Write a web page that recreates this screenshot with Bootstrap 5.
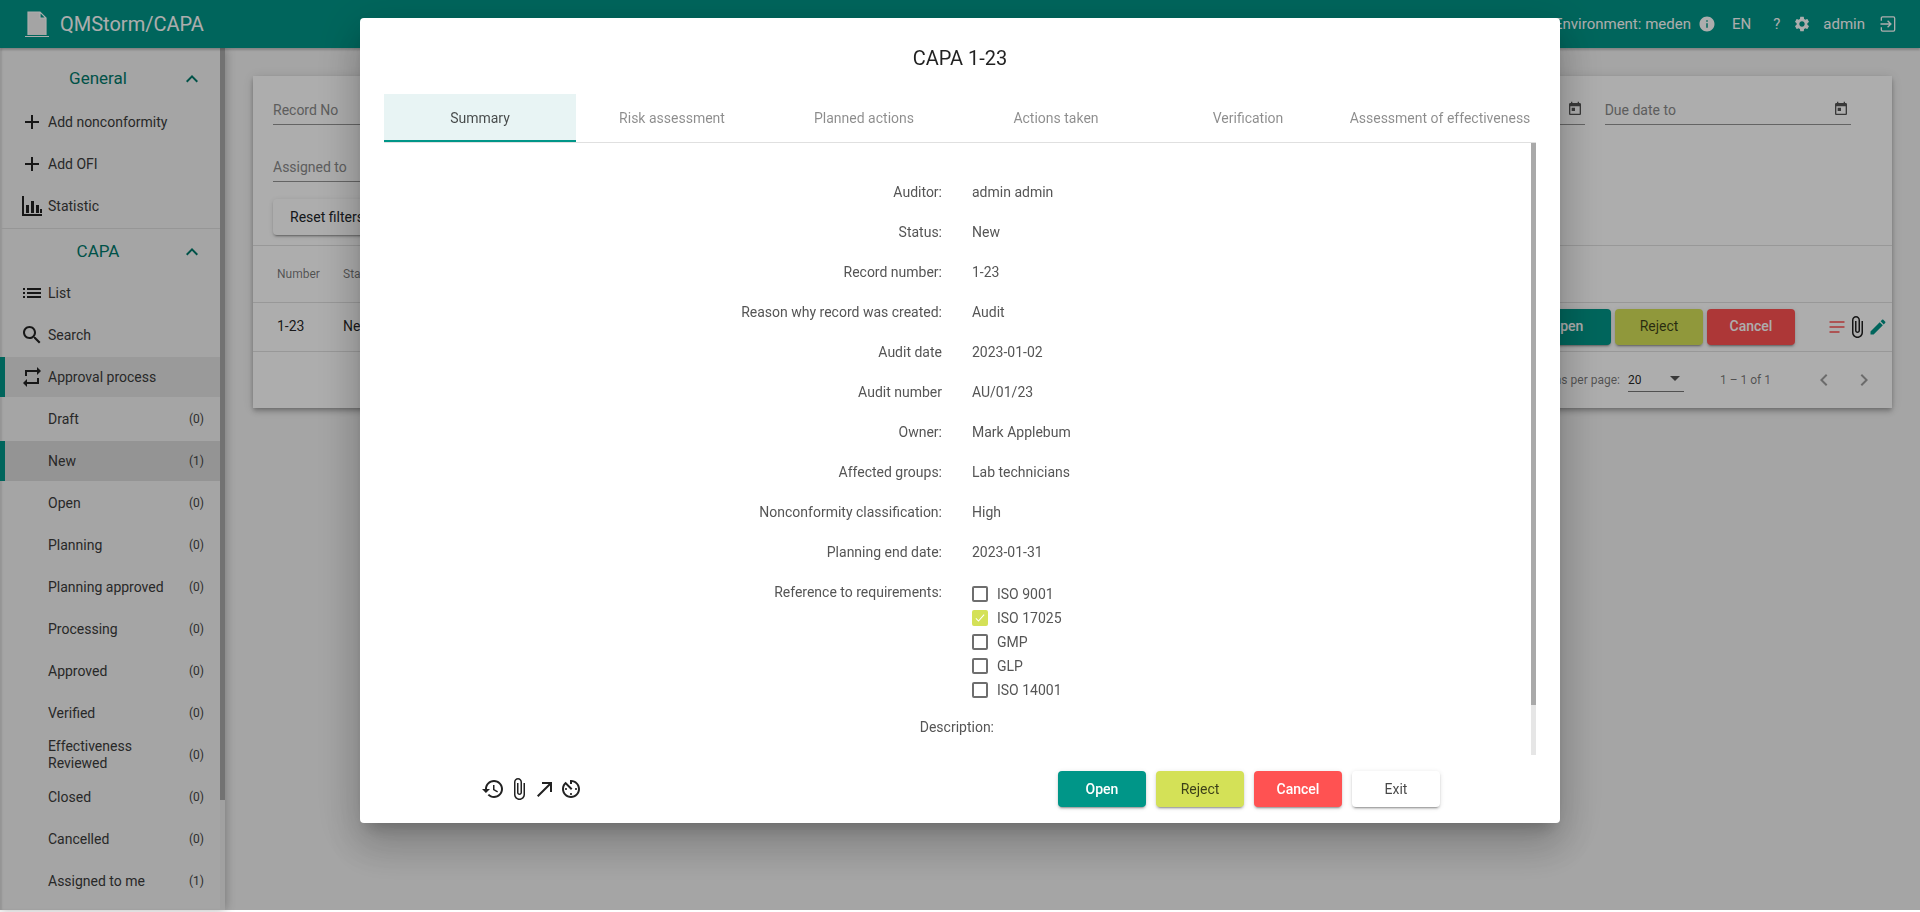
<!DOCTYPE html>
<html lang="en">
<head>
  <meta charset="UTF-8"/>
  <title>QMStorm/CAPA</title>
  <link href="https://cdn.jsdelivr.net/npm/bootstrap@5.3.0/dist/css/bootstrap.min.css" rel="stylesheet"/>
  <style>
    html, body { height: 100%; overflow: hidden; background: #fff; }
    body { font-family: Roboto, "Liberation Sans", sans-serif; font-size: 14px; color: rgba(0,0,0,.87); }
    svg { fill: currentColor; flex: none; display: block; }

    .app-shell { height: 910px; display: flex; flex-direction: column; background: #f3f3f3; }
    .top-bar { height: 48px; flex: none; background: #009688; color: #fff; box-shadow: 0 2px 2px rgba(0,0,0,.2); position: relative; z-index: 2; padding-left: 24px; padding-right: 22px; }
    .brand-name { font-size: 20px; margin-left: 10px; }
    .top-text { font-size: 15px; }
    .app-main { flex: 1; min-height: 0; display: flex; }

    .side-wrap { width: 225px; flex: none; display: flex; box-shadow: 0 0 10px rgba(0,0,0,.3), inset 2px 0 2px rgba(0,0,0,.1); position: relative; z-index: 1; }
    .side-menu { width: 220px; flex: none; overflow: hidden; }
    .side-scroll { width: 5px; flex: none; background: #ededed; }
    .side-scroll-thumb { height: 752px; background: #a9a9a9; }
    .side-head { height: 44px; padding-top: 2px; color: #00796b; font-size: 17px; position: relative; }
    .side-head svg { position: absolute; left: 180px; top: 11px; }
    .side-head-first { margin-top: 8px; margin-bottom: 2px; }
    .side-sep { border-top: 1px solid #ddd; }
    .side-item { height: 40px; margin-bottom: 2px; padding-left: 48px; padding-right: 16px; line-height: 17px; color: #3b3b3b; position: relative; }
    .side-item svg { position: absolute; left: 20px; top: 8px; color: #222; }
    .side-item.on-a { background: #e4e4e4; box-shadow: inset 5px 0 #009688; }
    .side-item.on-b { background: #dbdbdb; box-shadow: inset 5px 0 #009688; }
    .side-item .cnt { font-size: 12px; color: #444; }
    .side-item .lbl { width: 118px; }

    .page-area { flex: 1; padding: 28px; min-width: 0; }
    .filter-card { background: #fff; border-radius: 0; box-shadow: 0 2px 4px -1px rgba(0,0,0,.2), 0 4px 5px rgba(0,0,0,.14), 0 1px 10px rgba(0,0,0,.12); height: 332px; border: 0; }
    .filter-top { padding: 21px 41px 0 20px; height: 170px; border-bottom: 1px solid #e0e0e0; }
    .filter-grid { display: grid; grid-template-columns: repeat(6, 1fr); column-gap: 20px; row-gap: 29px; }
    .fake-field { height: 28px; border-bottom: 1px solid #949494; color: #8a8a8a; position: relative; padding-top: 3px; }
    .fake-field svg { position: absolute; right: 2px; top: 4px; color: #555; }
    .tb-head { height: 57px; padding-left: 24px; font-size: 12px; color: rgba(0,0,0,.54); border-bottom: 1px solid #e0e0e0; }
    .tb-row { height: 49px; padding-left: 24px; padding-bottom: 1px; border-bottom: 1px solid #e0e0e0; }
    .tb-c1 { width: 66px; }
    .row-btn { width: 88px; height: 36px; margin-right: 4px; }
    .row-tools { margin-left: 28px; margin-right: 4px; }
    .tool-lines { color: #ff5252; margin-right: -2px; }
    .tool-clip { margin-right: -1px; }
    .tool-edit { color: #009688; }
    .pager { height: 56px; color: rgba(0,0,0,.54); font-size: 12px; }
    .pager-sel { width: 56px; height: 24px; border-bottom: 1px solid #777; color: rgba(0,0,0,.87); margin-left: 8px; margin-right: 36px; position: relative; }
    .pager-sel::after { content: ""; position: absolute; right: 4px; top: 8px; border-left: 5px solid transparent; border-right: 5px solid transparent; border-top: 5px solid #555; }
    .pager-prev { margin-left: 41px; margin-right: 16px; color: rgba(0,0,0,.38); }
    .pager-next { margin-right: 16px; color: rgba(0,0,0,.38); }

    .act-btn { width: 88px; height: 36px; padding: 0; border: 0; border-radius: 4px; font-size: 14px; font-weight: 500; box-shadow: 0 3px 1px -2px rgba(0,0,0,.2), 0 2px 2px rgba(0,0,0,.14), 0 1px 5px rgba(0,0,0,.12); }
    .act-open, .act-open:hover { background: #009688; color: #fff; }
    .act-reject, .act-reject:hover { background: #d4e157; color: rgba(0,0,0,.72); font-weight: 400; }
    .act-cancel, .act-cancel:hover { background: #ff5252; color: #fff; }
    .act-exit, .act-exit:hover { background: #fff; color: rgba(0,0,0,.72); font-weight: 400; }
    .reset-btn { margin-top: 17px; width: 108px; background: #fff; font-weight: 400; }

    .dim-layer { position: fixed; left: 0; right: 0; top: 0; height: 910px; background: rgba(0,0,0,.32); z-index: 10; }
    .capa-dialog { position: fixed; left: 360px; top: 18px; width: 1200px; height: 805px; z-index: 11; background: #fff; border-radius: 4px; box-shadow: 0 11px 15px -7px rgba(0,0,0,.2), 0 24px 38px 3px rgba(0,0,0,.14), 0 9px 46px 8px rgba(0,0,0,.12); display: flex; flex-direction: column; }
    .dlg-title { height: 76px; flex: none; font-size: 20px; color: rgba(0,0,0,.87); line-height: 80px; text-align: center; }
    .dlg-tabs { margin: 0 24px; height: 49px; flex: none; border-bottom: 1px solid #e0e0e0; }
    .dlg-tab { width: 192px; height: 48px; color: rgba(0,0,0,.45); }
    .dlg-tab.sel { background: #e8f4f4; color: rgba(0,0,0,.7); box-shadow: inset 0 -2px #009688; }
    .dlg-body { flex: 1; min-height: 0; position: relative; margin: 0 24px; padding-top: 29px; overflow: hidden; color: #555; }
    .dlg-track { position: absolute; right: 0; top: 0; bottom: 0; width: 5px; background: #e6e6e6; }
    .dlg-thumb { height: 562px; background: #a9a9a9; }
    .info-row { min-height: 40px; display: flex; }
    .info-key { width: 558px; text-align: right; line-height: 40px; flex: none; }
    .info-val { margin-left: 30px; line-height: 40px; }
    .req-list { margin-left: 30px; padding-top: 10px; padding-bottom: 5px; }
    .req-item { height: 24px; display: flex; align-items: center; margin: 0; padding: 0; }
    .req-item .form-check-input { width: 16px; height: 16px; margin: 0 9px 0 0; border: 2px solid #6e6e6e; border-radius: 2px; float: none; flex: none; }
    .req-item .form-check-input:checked { background-color: #d4e157; border-color: #d4e157; background-image: url("data:image/svg+xml,%3csvg xmlns='http://www.w3.org/2000/svg' viewBox='0 0 16 16'%3e%3cpath fill='none' stroke='%23fff' stroke-width='1.4' d='M2.5 8.5l3.5 3.5 7.5-8.5'/%3e%3c/svg%3e"); }
    .desc-key { width: 610px; text-align: right; line-height: 40px; }
    .dlg-foot { height: 68px; flex: none; padding: 16px 120px 0 121px; }
    .foot-icons { gap: 2px; color: #222; margin-top: 6px; }
    .foot-btns { gap: 10px; }
  </style>
</head>
<body>
  <div class="app-shell">
    <!-- toolbar -->
    <header class="top-bar d-flex align-items-center">
      <svg width="26" height="28" viewBox="0 0 26 28"><path d="M4 25V2h12l6 6v17M16 2v6h6M1 26.5h24" fill="#f2f2f2" stroke="#fff" stroke-width="1.2"/></svg>
      <span class="brand-name">QMStorm/CAPA</span>
      <div class="ms-auto d-flex align-items-center">
        <span class="top-text">Environment: meden</span>
        <svg style="margin-left:7px" width="18" height="18" viewBox="0 0 24 24"><path d="M12 2C6.48 2 2 6.48 2 12s4.48 10 10 10 10-4.48 10-10S17.52 2 12 2zm1 15h-2v-6h2v6zm0-8h-2V7h2v2z"/></svg>
        <span class="top-text" style="margin-left:16px">EN</span>
        <span class="top-text" style="margin-left:22px">?</span>
        <svg style="margin-left:13px" width="18" height="18" viewBox="0 0 24 24"><path d="M19.14 12.94c.04-.3.06-.61.06-.94 0-.32-.02-.64-.07-.94l2.03-1.58c.18-.14.23-.41.12-.61l-1.92-3.32c-.12-.22-.37-.29-.59-.22l-2.39.96c-.5-.38-1.03-.7-1.62-.94l-.36-2.54c-.04-.24-.24-.41-.48-.41h-3.84c-.24 0-.43.17-.47.41l-.36 2.54c-.59.24-1.13.57-1.62.94l-2.39-.96c-.22-.08-.47 0-.59.22L2.74 8.87c-.12.21-.08.47.12.61l2.03 1.58c-.05.3-.09.63-.09.94s.02.64.07.94l-2.03 1.58c-.18.14-.23.41-.12.61l1.92 3.32c.12.22.37.29.59.22l2.39-.96c.5.38 1.03.7 1.62.94l.36 2.54c.05.24.24.41.48.41h3.84c.24 0 .44-.17.47-.41l.36-2.54c.59-.24 1.13-.56 1.62-.94l2.39.96c.22.08.47 0 .59-.22l1.92-3.32c.12-.22.07-.47-.12-.61l-2.01-1.58zM12 15.6c-1.98 0-3.6-1.62-3.6-3.6s1.62-3.6 3.6-3.6 3.6 1.62 3.6 3.6-1.62 3.6-3.6 3.6z"/></svg>
        <span class="top-text" style="margin-left:12px">admin</span>
        <svg style="margin-left:13px" width="20" height="20" viewBox="0 0 24 24"><path d="M4 8V5a1.5 1.5 0 0 1 1.5-1.5h13A1.5 1.5 0 0 1 20 5v14a1.5 1.5 0 0 1-1.5 1.5h-13A1.5 1.5 0 0 1 4 19v-3M3 12h12M11.5 8l4 4-4 4" fill="none" stroke="#fff" stroke-width="1.6"/></svg>
      </div>
    </header>

    <div class="app-main">
      <!-- sidebar -->
      <aside class="side-wrap">
        <nav class="side-menu">
          <div class="side-head side-head-first d-flex align-items-center justify-content-center pe-4">General<svg width="24" height="24" viewBox="0 0 24 24"><path d="M12 8l-6 6 1.41 1.41L12 10.83l4.59 4.58L18 14z"/></svg></div>
          <div class="side-item d-flex align-items-center"><svg width="24" height="24" viewBox="0 0 24 24"><path d="M19 13h-6v6h-2v-6H5v-2h6V5h2v6h6v2z"/></svg>Add nonconformity</div>
          <div class="side-item d-flex align-items-center"><svg width="24" height="24" viewBox="0 0 24 24"><path d="M19 13h-6v6h-2v-6H5v-2h6V5h2v6h6v2z"/></svg>Add OFI</div>
          <div class="side-item d-flex align-items-center"><svg width="24" height="24" viewBox="0 0 24 24"><path d="M2 2h2v18h18v2H2zM6 11h3v8H6zM11 7h3v12h-3zM16 11h3v8h-3zM20 15h2v4h-2z"/></svg>Statistic</div>
          <div class="side-sep"></div>
          <div class="side-head d-flex align-items-center justify-content-center pe-4">CAPA<svg width="24" height="24" viewBox="0 0 24 24"><path d="M12 8l-6 6 1.41 1.41L12 10.83l4.59 4.58L18 14z"/></svg></div>
          <div class="side-item d-flex align-items-center"><svg width="24" height="24" viewBox="0 0 24 24"><path d="M3 13h2v-2H3v2zm0 4h2v-2H3v2zm0-8h2V7H3v2zm4 4h14v-2H7v2zm0 4h14v-2H7v2zM7 7v2h14V7H7z"/></svg>List</div>
          <div class="side-item d-flex align-items-center"><svg width="24" height="24" viewBox="0 0 24 24"><path d="M15.5 14h-.79l-.28-.27C15.41 12.59 16 11.11 16 9.5 16 5.91 13.09 3 9.5 3S3 5.91 3 9.5 5.91 16 9.5 16c1.61 0 3.09-.59 4.23-1.57l.27.28v.79l5 4.99L20.49 19l-4.99-5zm-6 0C7.01 14 5 11.99 5 9.5S7.01 5 9.5 5 14 7.01 14 9.5 11.99 14 9.5 14z"/></svg>Search</div>
          <div class="side-item on-a d-flex align-items-center"><svg width="24" height="24" viewBox="0 0 24 24"><path d="M7 7h10v3l4-4-4-4v3H5v6h2V7zm10 10H7v-3l-4 4 4 4v-3h12v-6h-2v4z"/></svg>Approval process</div>
          <div class="side-item d-flex align-items-center justify-content-between"><span class="lbl">Draft</span><span class="cnt">(0)</span></div>
          <div class="side-item on-b d-flex align-items-center justify-content-between"><span class="lbl">New</span><span class="cnt">(1)</span></div>
          <div class="side-item d-flex align-items-center justify-content-between"><span class="lbl">Open</span><span class="cnt">(0)</span></div>
          <div class="side-item d-flex align-items-center justify-content-between"><span class="lbl">Planning</span><span class="cnt">(0)</span></div>
          <div class="side-item d-flex align-items-center justify-content-between"><span class="lbl">Planning approved</span><span class="cnt">(0)</span></div>
          <div class="side-item d-flex align-items-center justify-content-between"><span class="lbl">Processing</span><span class="cnt">(0)</span></div>
          <div class="side-item d-flex align-items-center justify-content-between"><span class="lbl">Approved</span><span class="cnt">(0)</span></div>
          <div class="side-item d-flex align-items-center justify-content-between"><span class="lbl">Verified</span><span class="cnt">(0)</span></div>
          <div class="side-item d-flex align-items-center justify-content-between"><span class="lbl">Effectiveness Reviewed</span><span class="cnt">(0)</span></div>
          <div class="side-item d-flex align-items-center justify-content-between"><span class="lbl">Closed</span><span class="cnt">(0)</span></div>
          <div class="side-item d-flex align-items-center justify-content-between"><span class="lbl">Cancelled</span><span class="cnt">(0)</span></div>
          <div class="side-item d-flex align-items-center justify-content-between"><span class="lbl">Assigned to me</span><span class="cnt">(1)</span></div>
        </nav>
        <div class="side-scroll"><div class="side-scroll-thumb"></div></div>
      </aside>

      <!-- record list behind the dialog -->
      <main class="page-area">
        <div class="card filter-card">
          <div class="filter-top">
            <div class="filter-grid">
              <div class="fake-field">Record No</div>
              <div class="fake-field"></div>
              <div class="fake-field"></div>
              <div class="fake-field"></div>
              <div class="fake-field"><svg width="16" height="16" viewBox="0 0 24 24"><path d="M19 3h-1V1h-2v2H8V1H6v2H5c-1.11 0-1.99.9-1.99 2L3 19c0 1.1.89 2 2 2h14c1.1 0 2-.9 2-2V5c0-1.1-.9-2-2-2zm0 16H5V8h14v11zM7 10h5v5H7z"/></svg></div>
              <div class="fake-field">Due date to<svg width="16" height="16" viewBox="0 0 24 24"><path d="M19 3h-1V1h-2v2H8V1H6v2H5c-1.11 0-1.99.9-1.99 2L3 19c0 1.1.89 2 2 2h14c1.1 0 2-.9 2-2V5c0-1.1-.9-2-2-2zm0 16H5V8h14v11zM7 10h5v5H7z"/></svg></div>
              <div class="fake-field">Assigned to</div>
            </div>
            <button class="btn act-btn reset-btn">Reset filters</button>
          </div>
          <div class="tb-head d-flex align-items-center"><span class="tb-c1">Number</span><span>Status</span></div>
          <div class="tb-row d-flex align-items-center">
            <span class="tb-c1">1-23</span><span>New</span>
            <div class="ms-auto d-flex align-items-center">
              <button class="btn act-btn row-btn act-open">Open</button>
              <button class="btn act-btn row-btn act-reject">Reject</button>
              <button class="btn act-btn row-btn act-cancel">Cancel</button>
              <div class="d-flex align-items-center row-tools">
                <svg class="tool-lines" width="20" height="20" viewBox="0 0 24 24"><path d="M3 5h18v2H3zM3 11h18v2H3zM3 17h12v2H3z"/></svg>
                <svg class="tool-clip" width="24" height="24" viewBox="0 0 24 24"><path d="M16.5 6v11.5c0 2.21-1.79 4-4 4s-4-1.79-4-4V5c0-1.38 1.12-2.5 2.5-2.5s2.5 1.12 2.5 2.5v10.5c0 .55-.45 1-1 1s-1-.45-1-1V6H10v9.5c0 1.38 1.12 2.5 2.5 2.5s2.5-1.12 2.5-2.5V5c0-2.21-1.79-4-4-4S7 2.79 7 5v12.5c0 3.04 2.46 5.5 5.5 5.5s5.5-2.46 5.5-5.5V6h-1.5z"/></svg>
                <svg class="tool-edit" width="20" height="20" viewBox="0 0 24 24"><path d="M3 17.25V21h3.75L17.81 9.94l-3.75-3.75L3 17.25zM20.71 7.04c.39-.39.39-1.02 0-1.41l-2.34-2.34c-.39-.39-1.02-.39-1.41 0l-1.83 1.83 3.75 3.75 1.83-1.83z"/></svg>
              </div>
            </div>
          </div>
          <div class="pager d-flex align-items-center justify-content-end">
            <span>Items per page:</span>
            <div class="pager-sel d-flex align-items-center">20</div>
            <span>1 – 1 of 1</span>
            <svg class="pager-prev" width="24" height="24" viewBox="0 0 24 24"><path d="M15.41 7.41L14 6l-6 6 6 6 1.41-1.41L10.83 12z"/></svg>
            <svg class="pager-next" width="24" height="24" viewBox="0 0 24 24"><path d="M10 6L8.59 7.41 13.17 12l-4.58 4.59L10 18l6-6z"/></svg>
          </div>
        </div>
      </main>
    </div>
  </div>

  <div class="dim-layer"></div>

  <!-- CAPA dialog -->
  <div class="capa-dialog">
    <div class="dlg-title">CAPA 1-23</div>
    <div class="dlg-tabs d-flex">
      <div class="dlg-tab sel d-flex align-items-center justify-content-center">Summary</div>
      <div class="dlg-tab d-flex align-items-center justify-content-center">Risk assessment</div>
      <div class="dlg-tab d-flex align-items-center justify-content-center">Planned actions</div>
      <div class="dlg-tab d-flex align-items-center justify-content-center">Actions taken</div>
      <div class="dlg-tab d-flex align-items-center justify-content-center">Verification</div>
      <div class="dlg-tab d-flex align-items-center justify-content-center">Assessment of effectiveness</div>
    </div>
    <div class="dlg-body">
      <div class="info-row"><div class="info-key">Auditor:</div><div class="info-val">admin admin</div></div>
      <div class="info-row"><div class="info-key">Status:</div><div class="info-val">New</div></div>
      <div class="info-row"><div class="info-key">Record number:</div><div class="info-val">1-23</div></div>
      <div class="info-row"><div class="info-key">Reason why record was created:</div><div class="info-val">Audit</div></div>
      <div class="info-row"><div class="info-key">Audit date</div><div class="info-val">2023-01-02</div></div>
      <div class="info-row"><div class="info-key">Audit number</div><div class="info-val">AU/01/23</div></div>
      <div class="info-row"><div class="info-key">Owner:</div><div class="info-val">Mark Applebum</div></div>
      <div class="info-row"><div class="info-key">Affected groups:</div><div class="info-val">Lab technicians</div></div>
      <div class="info-row"><div class="info-key">Nonconformity classification:</div><div class="info-val">High</div></div>
      <div class="info-row"><div class="info-key">Planning end date:</div><div class="info-val">2023-01-31</div></div>
      <div class="info-row">
        <div class="info-key">Reference to requirements:</div>
        <div class="req-list">
          <div class="form-check req-item"><input class="form-check-input" type="checkbox" id="r1"/><label class="form-check-label" for="r1">ISO 9001</label></div>
          <div class="form-check req-item"><input class="form-check-input" type="checkbox" id="r2" checked/><label class="form-check-label" for="r2">ISO 17025</label></div>
          <div class="form-check req-item"><input class="form-check-input" type="checkbox" id="r3"/><label class="form-check-label" for="r3">GMP</label></div>
          <div class="form-check req-item"><input class="form-check-input" type="checkbox" id="r4"/><label class="form-check-label" for="r4">GLP</label></div>
          <div class="form-check req-item"><input class="form-check-input" type="checkbox" id="r5"/><label class="form-check-label" for="r5">ISO 14001</label></div>
        </div>
      </div>
      <div class="desc-key">Description:</div>
      <div class="dlg-track"><div class="dlg-thumb"></div></div>
    </div>
    <div class="dlg-foot d-flex justify-content-between">
      <div class="foot-icons d-flex align-items-center align-self-start">
        <svg width="24" height="24" viewBox="0 0 24 24"><path d="M13 3c-4.97 0-9 4.03-9 9H1l3.89 3.89.07.14L9 12H6c0-3.87 3.13-7 7-7s7 3.13 7 7-3.13 7-7 7c-1.93 0-3.68-.79-4.94-2.06l-1.42 1.42C8.27 19.99 10.51 21 13 21c4.97 0 9-4.03 9-9s-4.03-9-9-9zm-1 5v5l4.28 2.54.72-1.21-3.5-2.08V8H12z"/></svg>
        <svg width="24" height="24" viewBox="0 0 24 24"><path d="M16.5 6v11.5c0 2.21-1.79 4-4 4s-4-1.79-4-4V5c0-1.38 1.12-2.5 2.5-2.5s2.5 1.12 2.5 2.5v10.5c0 .55-.45 1-1 1s-1-.45-1-1V6H10v9.5c0 1.38 1.12 2.5 2.5 2.5s2.5-1.12 2.5-2.5V5c0-2.21-1.79-4-4-4S7 2.79 7 5v12.5c0 3.04 2.46 5.5 5.5 5.5s5.5-2.46 5.5-5.5V6h-1.5z"/></svg>
        <svg width="24" height="24" viewBox="0 0 24 24"><path d="M9 5v2h6.59L4 18.59 5.41 20 17 8.41V15h2V5z"/></svg>
        <svg width="24" height="24" viewBox="0 0 24 24"><path d="M11 17c0 .55.45 1 1 1s1-.45 1-1-.45-1-1-1-1 .45-1 1zm0-14v4h2V5.08c3.39.49 6 3.39 6 6.92 0 3.87-3.13 7-7 7s-7-3.13-7-7c0-1.68.59-3.22 1.58-4.42L12 13l1.41-1.41-6.8-6.8v.02C4.42 6.45 3 9.05 3 12c0 4.97 4.02 9 9 9 4.97 0 9-4.03 9-9s-4.03-9-9-9h-1zm7 9c0-.55-.45-1-1-1s-1 .45-1 1 .45 1 1 1 1-.45 1-1zM6 12c0 .55.45 1 1 1s1-.45 1-1-.45-1-1-1-1 .45-1 1z"/></svg>
      </div>
      <div class="foot-btns d-flex align-self-start">
        <button class="btn act-btn act-open">Open</button>
        <button class="btn act-btn act-reject">Reject</button>
        <button class="btn act-btn act-cancel">Cancel</button>
        <button class="btn act-btn act-exit">Exit</button>
      </div>
    </div>
  </div>

  <script src="https://cdn.jsdelivr.net/npm/bootstrap@5.3.0/dist/js/bootstrap.bundle.min.js"></script>
</body>
</html>
